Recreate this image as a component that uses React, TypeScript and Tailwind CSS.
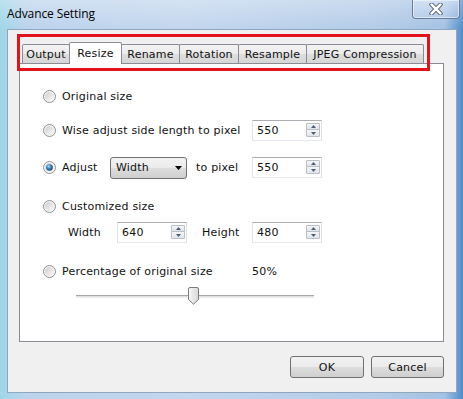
import React from "react";

const F = "font-['DejaVu_Sans',Verdana,sans-serif] text-[11px] leading-none text-[#111] tracking-[0.2px]";

function Radio({ checked }: { checked?: boolean }) {
  return (
    <svg width="13" height="13" viewBox="0 0 13 13" className="shrink-0">
      <defs>
        <linearGradient id="rb" x1="0" y1="0" x2="1" y2="1">
          <stop offset="0" stopColor="#cfcfcf" />
          <stop offset="1" stopColor="#fafafa" />
        </linearGradient>
        <radialGradient id="rc" cx="0.4" cy="0.35" r="0.7">
          <stop offset="0" stopColor="#b4e2fa" />
          <stop offset="0.45" stopColor="#3b86bd" />
          <stop offset="1" stopColor="#0f3d66" />
        </radialGradient>
      </defs>
      <circle cx="6.5" cy="6.5" r="6" fill="#f4f4f4" stroke="#8f9295" />
      <circle cx="6.5" cy="6.5" r="4.5" fill="url(#rb)" />
      {checked && <circle cx="6.5" cy="6.5" r="3.3" fill="url(#rc)" />}
    </svg>
  );
}

function Spin({ value }: { value: string }) {
  return (
    <div className="w-[70px] h-[21px] shrink-0 border border-[#abadb3] border-l-[#e2e3ea] border-r-[#dbdfe6] border-b-[#e3e9ef] bg-white flex items-center">
      <span className="pl-[4px] flex-1">{value}</span>
      <div className="w-[14px] h-[15px] mr-[1px] flex flex-col">
        <div className="h-[7px] flex items-center justify-center border border-[#b9bec7] bg-[linear-gradient(180deg,#f5f6f8,#e1e4e9)] rounded-t-[1px]">
          <svg width="5" height="3" viewBox="0 0 5 3">
            <path d="M0 3 L2.5 0 L5 3 Z" fill="#4b5d7a" />
          </svg>
        </div>
        <div className="h-[8px] -mt-px flex items-center justify-center border border-[#b9bec7] bg-[linear-gradient(180deg,#f5f6f8,#e1e4e9)] rounded-b-[1px]">
          <svg width="5" height="3" viewBox="0 0 5 3">
            <path d="M0 0 L2.5 3 L5 0 Z" fill="#4b5d7a" />
          </svg>
        </div>
      </div>
    </div>
  );
}

const btnBg =
  "bg-[linear-gradient(180deg,#f2f2f2_0%,#ebebeb_48%,#dddddd_52%,#cfcfcf_100%)]";

function Tab({ label, w, selected, first }: { label: string; w: number; selected?: boolean; first?: boolean }) {
  if (selected) {
    return (
      <div
        style={{ width: w }}
        className="relative z-10 -ml-px h-[22px] mb-[-1px] border border-b-0 border-[#898c95] bg-white flex items-start justify-center pt-[5px] rounded-t-[2px]"
      >
        {label}
      </div>
    );
  }
  return (
    <div
      style={{ width: w }}
      className={`${first ? "" : "-ml-px"} h-[19px] border border-b-0 border-[#898c95] bg-[linear-gradient(180deg,#f3f3f3_0%,#ebebeb_50%,#dedede_51%,#d6d6d6_100%)] flex items-center justify-center pt-[1px] rounded-t-[2px]`}
    >
      {label}
    </div>
  );
}

export default function App() {
  return (
    <div className={`${F} relative w-[463px] h-[399px] overflow-hidden flex flex-col bg-[linear-gradient(90deg,#9fd6e8_0%,#bcd3ec_6%,#c2d6ee_40%,#b4cce8_80%,#a4c2e4_96%,#4f8cc9_100%)]`}>
      {/* title bar */}
      <div className="relative h-[29px] shrink-0 flex items-center pl-[7px] pb-[1px] bg-[linear-gradient(180deg,rgba(255,255,255,0.3),rgba(255,255,255,0))]">
        <span className="font-['Open_Sans',sans-serif] text-[12px] text-black tracking-[-0.1px]">Advance Setting</span>
        <div className="absolute top-0 left-[412px] w-[48px] h-[19px] rounded-b-[4px] border border-t-0 border-[#6a7d96] bg-[linear-gradient(180deg,rgba(220,232,246,0.6),rgba(190,210,235,0.5))] shadow-[inset_0_0_0_1px_rgba(255,255,255,0.5)] flex items-center justify-center">
          <svg width="14" height="12" viewBox="0 0 14 12">
            <path d="M2.5 1.5 L11.5 10.5 M11.5 1.5 L2.5 10.5" stroke="#3b4a5e" strokeWidth="4.2" strokeLinecap="round" />
            <path d="M2.5 1.5 L11.5 10.5 M11.5 1.5 L2.5 10.5" stroke="#ffffff" strokeWidth="2.5" strokeLinecap="round" />
          </svg>
        </div>
      </div>

      {/* client area */}
      <div className="ml-[7px] mr-[6px] mb-[6px] h-[364px] border border-[#8fa6bf] bg-[#f0f0f0] flex flex-col">
        {/* tabs */}
        <div className="mt-[12px] ml-[14px] h-[21px] flex items-end relative z-10">
          <Tab label="Output" w={48} first />
          <Tab label="Resize" w={53} selected />
          <Tab label="Rename" w={59} />
          <Tab label="Rotation" w={60} />
          <Tab label="Resample" w={69} />
          <Tab label="JPEG Compression" w={118} />
        </div>

        {/* panel */}
        <div className="ml-[11px] mr-[12px] h-[279px] border border-[#898c95] bg-white flex flex-col pl-[23px]">
          <div className="mt-[22px] h-[20px] flex items-center">
            <Radio />
            <span className="ml-[6px]">Original size</span>
          </div>

          <div className="mt-[14px] h-[21px] flex items-center">
            <div className="w-[209px] flex items-center">
              <Radio />
              <span className="ml-[6px]">Wise adjust side length to pixel</span>
            </div>
            <Spin value="550" />
          </div>

          <div className="mt-[16px] h-[21px] flex items-center">
            <div className="w-[209px] flex items-center">
              <Radio checked />
              <span className="ml-[6px] w-[48px]">Adjust</span>
              <div className={`w-[77px] h-[22px] rounded-[3px] border border-[#707070] ${btnBg} flex items-center pl-[5px] pr-[4px]`}>
                <span className="flex-1">Width</span>
                <svg width="7" height="4" viewBox="0 0 7 4">
                  <path d="M0 0 L7 0 L3.5 4 Z" fill="#000" />
                </svg>
              </div>
              <span className="ml-[9px]">to pixel</span>
            </div>
            <Spin value="550" />
          </div>

          <div className="mt-[18px] h-[20px] flex items-center">
            <Radio />
            <span className="ml-[6px]">Customized size</span>
          </div>

          <div className="mt-[6px] h-[21px] flex items-center pl-[25px]">
            <span className="w-[49px]">Width</span>
            <Spin value="640" />
            <span className="ml-[15px] w-[50px]">Height</span>
            <Spin value="480" />
          </div>

          <div className="mt-[18px] h-[20px] flex items-center">
            <div className="w-[209px] flex items-center">
              <Radio />
              <span className="ml-[6px]">Percentage of original size</span>
            </div>
            <span>50%</span>
          </div>

          <div className="mt-[6px] ml-[33px] w-[238px] h-[18px] relative flex items-center">
            <div className="w-full h-[3px] border-t border-[#a7a7a7] border-b border-b-[#ececec] bg-[#e2e2e2]" />
            <svg className="absolute left-[112px] top-0" width="11" height="18" viewBox="0 0 11 18">
              <defs>
                <linearGradient id="th" x1="0" y1="0" x2="1" y2="0">
                  <stop offset="0" stopColor="#f7f7f7" />
                  <stop offset="1" stopColor="#d8d8d8" />
                </linearGradient>
              </defs>
              <path d="M0.5 2 Q0.5 0.5 2 0.5 H9 Q10.5 0.5 10.5 2 V12.5 L5.5 17.2 L0.5 12.5 Z" fill="url(#th)" stroke="#7b7b7b" />
            </svg>
          </div>
        </div>

        {/* buttons */}
        <div className="mt-[14px] mr-[12px] flex justify-end gap-[7px]">
          <div className={`w-[74px] h-[22px] rounded-[3px] border border-[#707070] ${btnBg} flex items-center justify-center`}>OK</div>
          <div className={`w-[73px] h-[22px] rounded-[3px] border border-[#707070] ${btnBg} flex items-center justify-center`}>Cancel</div>
        </div>
      </div>

      {/* red annotation box */}
      <div className="absolute left-[17px] top-[34px] w-[413px] h-[37px] border-[3px] border-[#e3121b] pointer-events-none" />
    </div>
  );
}
